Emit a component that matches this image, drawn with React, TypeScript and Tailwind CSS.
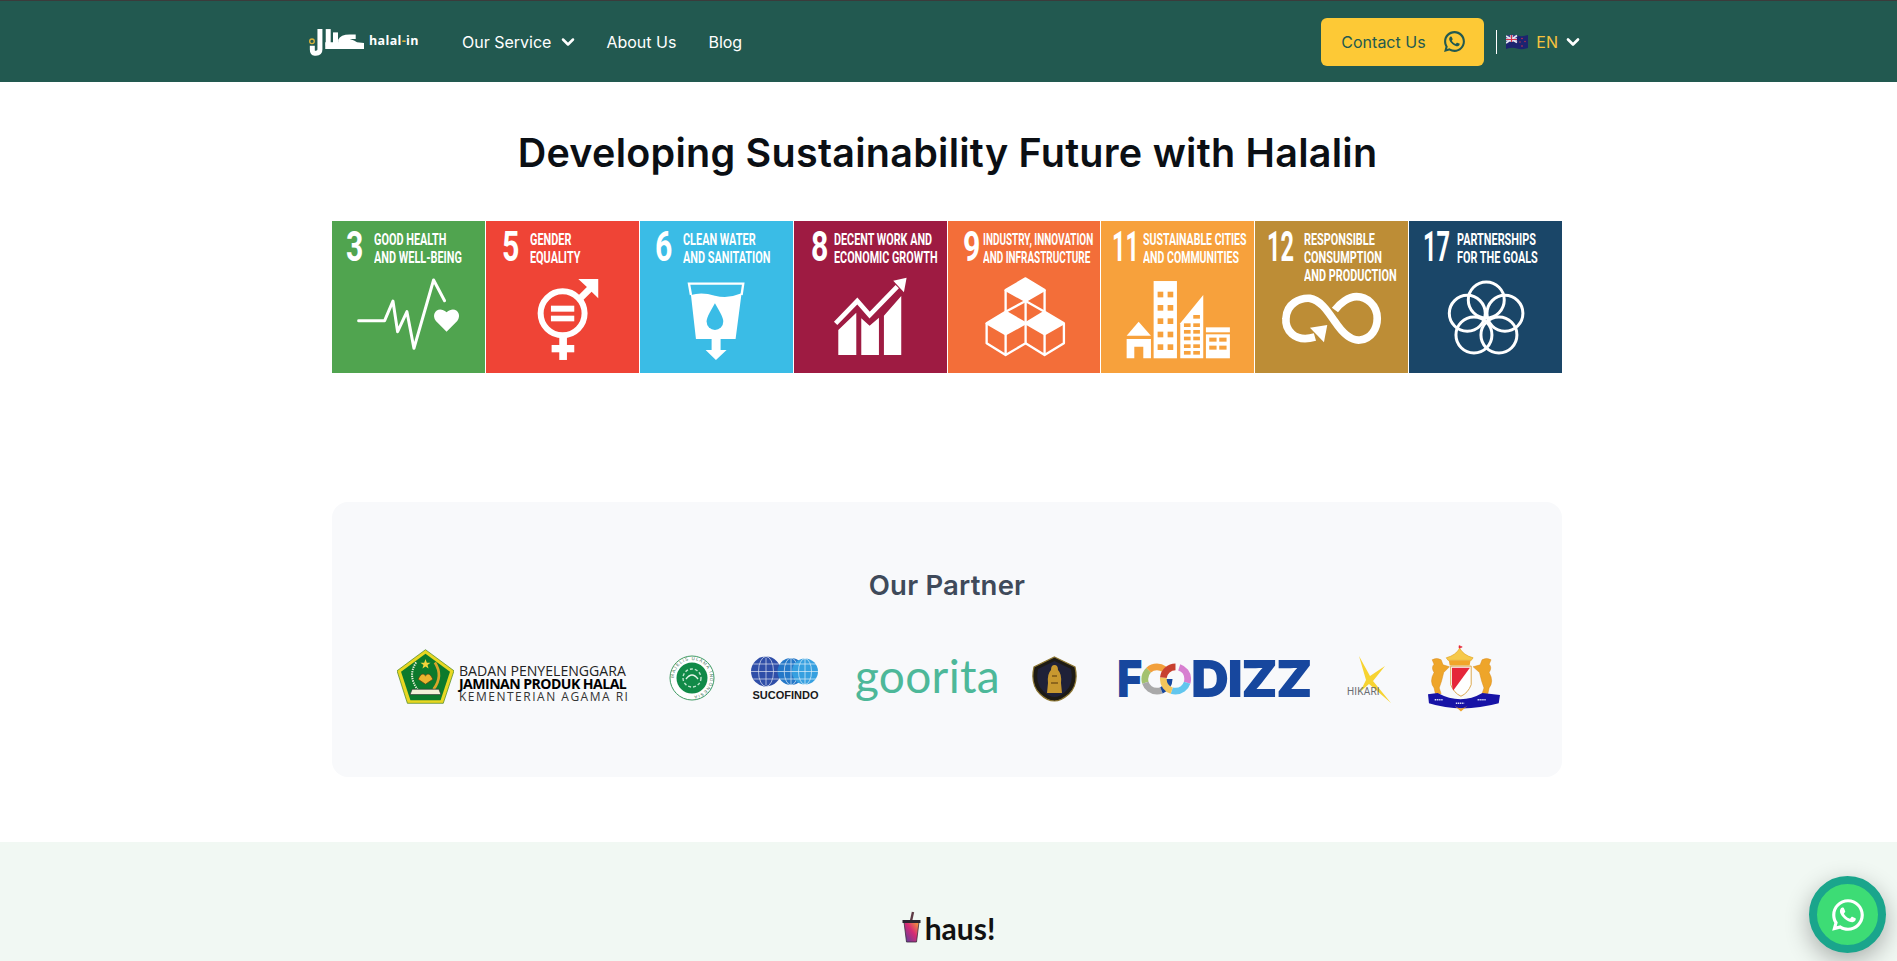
import React from "react";
import { ChevronDown } from "lucide-react";
import { RiWhatsappLine } from "react-icons/ri";

function Tile({ color, num, lines, numBox, textBox, scale, numScale, ox, children }: { color: string; num: string; lines: string[]; numBox: string; textBox: string; scale: string; numScale: string; ox: number; children: React.ReactNode }) {
  return (
    <div className={`flex-1 h-[152px] flex flex-col overflow-hidden ${color}`}>
      <div className={`h-[50px] flex items-start pt-[9px] text-white font-['Roboto'] font-bold ${numBox}`}>
        <div className={`shrink-0 w-0 text-[42px] leading-[34px] whitespace-nowrap origin-top-left ${numScale}`}>{num}</div>
        <div className={`whitespace-nowrap text-[17px] leading-[18px] origin-top-left ${textBox} ${scale}`}>
          {lines.map((l) => <div key={l}>{l}</div>)}
        </div>
      </div>
      <svg viewBox={`${ox} 168 459 306`} className="w-full h-[102px] block">{children}</svg>
    </div>
  );
}

function Pulse() {
  return (
    <>
      <polyline points="100,317 178,317 203,258 217,350 245,290 266,400 325,195 358,257" fill="none" stroke="#fff" strokeWidth="9" strokeLinejoin="round" strokeLinecap="round" />
      <path d="M364 350 L332 318 C315 295 340 270 364 292 C388 270 413 295 396 318 Z" fill="#fff" />
    </>
  );
}
function Gender() {
  return (
    <>
      <circle cx="710" cy="295" r="66" fill="none" stroke="#fff" strokeWidth="18" />
      <path d="M757 192 H817 V250 L797 230 L772 255 L758 241 L783 216 Z" fill="#fff" />
      <rect x="675" y="272" width="70" height="18" fill="#fff" />
      <rect x="675" y="302" width="70" height="17" fill="#fff" />
      <rect x="700" y="365" width="23" height="70" fill="#fff" />
      <rect x="677" y="390" width="68" height="22" fill="#fff" />
    </>
  );
}
function Water() {
  return (
    <>
      <path d="M1098 240 L1092 206 H1255 L1250 240" fill="none" stroke="#fff" strokeWidth="7" />
      <path d="M1098 240 Q1130 230 1170 242 Q1210 252 1250 235 L1232 372 H1113 Z" fill="#fff" />
      <path d="M1170 265 C1150 300 1145 310 1145 320 A25 25 0 0 0 1195 320 C1195 310 1190 300 1170 265Z" fill="#3abce6" />
      <path d="M1160 372 H1187 V405 H1205 L1173 435 L1142 405 H1160 Z" fill="#fff" />
    </>
  );
}
function Growth() {
  return (
    <>
      <path d="M143 345 L197 293 V420 H143 Z M212 310 L237 332 L265 308 V420 H212 Z M280 302 L332 243 V420 H280 Z" fill="#fff" />
      <polyline points="135,325 200,258 237,300 320,215" fill="none" stroke="#fff" strokeWidth="14" />
      <polygon points="348,188 308,197 340,232" fill="#fff" />
    </>
  );
}
function Cubes() {
  return (
    <g fill="none" stroke="#fff" strokeWidth="7" strokeLinejoin="round">
      <path d="M705 190 L762 225 L705 258 L645 225 Z" fill="#fff" />
      <path d="M645 225 V290 M762 225 V290 M705 258 V325" />
      <path d="M645 290 L705 325 L645 358 L588 325 Z" fill="#fff" />
      <path d="M588 325 V385 L645 420 L705 385 V325 M645 358 V420 M645 290 L705 258 L762 290" />
      <path d="M762 290 L820 325 L762 358 L705 325 Z" fill="#fff" />
      <path d="M820 325 V385 L762 420 L705 385 M762 358 V420" />
    </g>
  );
}
function City() {
  const rows = [230, 270, 310, 350, 388];
  return (
    <>
      <polygon points="1048,320 1012,362 1085,362" fill="#fff" />
      <path d="M1012 372 H1085 V430 H1062 V395 H1035 V430 H1012 Z" fill="#fff" />
      <rect x="1093" y="198" width="70" height="232" fill="#fff" />
      {rows.map((y) => (
        <g key={y} fill="#f7a13c">
          <rect x="1105" y={y} width="17" height="17" />
          <rect x="1135" y={y} width="17" height="17" />
        </g>
      ))}
      <polygon points="1242,240 1242,430 1173,430 1173,325" fill="#fff" />
      {[300, 325, 345, 365, 388, 408].map((y) => (
        <g key={y} fill="#f7a13c">
          <rect x="1212" y={y} width="20" height="11" />
          {y > 320 && <rect x="1184" y={y} width="20" height="11" />}
        </g>
      ))}
      <rect x="1250" y="337" width="72" height="15" fill="#fff" />
      <rect x="1250" y="358" width="72" height="72" fill="#fff" />
      {[368, 392].map((y) => (
        <g key={y} fill="#f7a13c">
          <rect x="1260" y={y} width="22" height="12" />
          <rect x="1290" y={y} width="22" height="12" />
        </g>
      ))}
    </>
  );
}
function Loop() {
  return (
    <>
      <path d="M195 366 C130 385 105 340 108 310 C110 265 150 248 180 250 C215 255 240 300 255 320 C275 350 300 378 330 375 C365 372 382 340 382 310 C382 270 350 245 320 245 C295 245 270 265 255 285" fill="none" stroke="#fff" strokeWidth="23" />
      <polygon points="180,338 232,330 222,382" fill="#fff" />
    </>
  );
}
function Rings() {
  return (
    <g fill="none" stroke="#fff" strokeWidth="9">
      <circle cx="712" cy="255" r="54" />
      <circle cx="655" cy="295" r="54" />
      <circle cx="675" cy="360" r="54" />
      <circle cx="750" cy="360" r="54" />
      <circle cx="768" cy="295" r="54" />
    </g>
  );
}

function HalalLogo() {
  return (
    <svg viewBox="27 27 166 84" className="w-[55px] h-[28px] shrink-0">
      <g fill="none" stroke="#fff" strokeWidth="15">
        <path d="M60 30 V92 Q60 103 48 103 H44 Q37 103 37 92 V80" />
        <path d="M85 30 V80" />
        <path d="M107 40 V80" />
      </g>
      <path d="M76 70 H115 V62 Q122 46 150 46 H168 V60 H150 Q165 64 172 70 L193 72 V90 H76 Z" fill="#fff" />
      <circle cx="36" cy="67" r="7" fill="none" stroke="#d9b23b" strokeWidth="4" />
    </svg>
  );
}

function NzFlag() {
  return (
    <svg viewBox="0 0 22 16" className="w-[22px] h-[16px] mr-[8px]">
      <path d="M0 2 Q6 0 11 1.5 T22 1 V14 Q16 16 11 14.5 T0 15 Z" fill="#1c2470" />
      <path d="M0 2 Q6 0 11 1.5 V8.5 Q6 7 0 9 Z" fill="#3c3f8f" />
      <path d="M0 2 L11 8.5 M11 1.5 L0 9" stroke="#e8e8f0" strokeWidth="1.6" />
      <path d="M5.5 1 V8 M0 5.5 H11" stroke="#e8e8f0" strokeWidth="2.4" />
      <path d="M5.5 1 V8 M0 5.5 H11" stroke="#d6324a" strokeWidth="1.2" />
      <g fill="#d6324a">
        <circle cx="16" cy="4.5" r="0.8" /><circle cx="19" cy="7.5" r="0.7" /><circle cx="14" cy="8" r="0.7" /><circle cx="16" cy="12" r="0.8" />
      </g>
    </svg>
  );
}

function Emblem() {
  return (
    <svg viewBox="37 62 170 160" className="w-[57px] h-[55px] shrink-0 -translate-y-[3px]">
      <polygon points="122,62 207,125 175,222 68,222 37,125" fill="#e8d722" stroke="#3d7f1c" strokeWidth="2" />
      <polygon points="122,74 195,128 167,213 77,213 49,128" fill="#0c7a2c" />
      <polygon points="122,90 126,101 137,101 128,108 131,118 122,112 113,118 116,108 107,101 118,101" fill="#f3d43b" />
      <path d="M150 100 Q176 140 146 180" fill="none" stroke="#d8a52a" strokeWidth="8" />
      <path d="M94 100 Q68 140 98 180" fill="none" stroke="#e9efd9" strokeWidth="6" strokeDasharray="4 3" />
      <path d="M100 150 Q112 125 122 140 Q132 125 144 150 L122 165 Z" fill="#eab52f" stroke="#5b3b12" strokeWidth="2" />
      <path d="M82 180 H162 L168 196 H76 Z" fill="#f4f1d8" stroke="#333" strokeWidth="2" />
    </svg>
  );
}

function MuiSeal() {
  return (
    <svg viewBox="0 0 46 46" className="w-[46px] h-[46px] shrink-0 -translate-y-px">
      <defs>
        <path id="muiArc" d="M5 23 A18 18 0 1 1 41 23 A18 18 0 1 1 5 23" />
      </defs>
      <circle cx="23" cy="23" r="22" fill="#fff" stroke="#3f9a62" strokeWidth="1" />
      <text fontSize="4.4" fill="#3b6d50" fontFamily="Liberation Sans" letterSpacing="1">
        <textPath href="#muiArc">MAJELIS ULAMA INDONESIA</textPath>
      </text>
      <circle cx="23" cy="23" r="15.5" fill="#118a48" />
      <circle cx="23" cy="23" r="9" fill="none" stroke="#bfe5cd" strokeWidth="1.4" strokeDasharray="3 2" />
      <path d="M17 24 Q23 16 29 24" fill="none" stroke="#e6f5ea" strokeWidth="1.4" />
    </svg>
  );
}

function Sucofindo() {
  const globes = [
    { x: 15, r: 15, c: "#2f4ea8" },
    { x: 40, r: 13.5, c: "#2578c8" },
    { x: 54, r: 13, c: "#36a0e0" },
  ];
  return (
    <div className="w-[68px] shrink-0 flex flex-col items-center -translate-y-px">
      <svg viewBox="0 0 68 31" className="w-[68px] h-[31px]">
        {globes.map((g) => (
          <g key={g.x}>
            <circle cx={g.x} cy="15.5" r={g.r} fill={g.c} />
            <g fill="none" stroke="#fff" strokeWidth="0.7" opacity="0.85">
              <ellipse cx={g.x} cy="15.5" rx={g.r * 0.5} ry={g.r} />
              <path d={`M${g.x - g.r} 15.5 h${g.r * 2} M${g.x - g.r * 0.85} 8 h${g.r * 1.7} M${g.x - g.r * 0.85} 23 h${g.r * 1.7} M${g.x} 2 v27`} />
            </g>
          </g>
        ))}
      </svg>
      <div className="font-['Liberation_Sans'] font-bold text-[10.5px] leading-[11px] mt-[3px] text-[#1a1a1a] origin-center scale-x-[1.05]">SUCOFINDO</div>
    </div>
  );
}

function UbShield() {
  return (
    <svg viewBox="0 0 47 46" className="w-[47px] h-[46px] shrink-0">
      <path d="M23.5 1 L44 11 Q48 28 38 38 Q30 45 23.5 45 Q16 45 9 38 Q-1 28 3 11 Z" fill="#1d1a14" stroke="#8a7430" strokeWidth="1.2" />
      <path d="M23.5 5 L40 13 Q43 27 35 35 Q29 41 23.5 41 Q18 41 12 35 Q4 27 7 13 Z" fill="#1f2138" />
      <path d="M23.5 9 Q27 9 27 14 Q31 18 30 27 L31 37 H16 L17 27 Q16 18 20 14 Q20 9 23.5 9 Z" fill="#c8982f" />
      <path d="M21 20 H26 M20 27 H27" stroke="#7a5618" strokeWidth="1.4" />
    </svg>
  );
}

function Foodizz() {
  const arc = (cx: number, color: string, start: number, len: number) => (
    <circle cx={cx} cy="19" r="14.5" fill="none" stroke={color} strokeWidth="8" pathLength={100} strokeDasharray={`${len} ${100 - len}`} strokeDashoffset={-start} transform={`rotate(-90 ${cx} 19)`} />
  );
  return (
    <div className="flex items-center w-[191px] shrink-0 h-[38px] text-[#17479e] font-['Inter'] font-black text-[51px] leading-[38px]">
      <span className="w-[24px] origin-left scale-x-[0.85]">F</span>
      <svg viewBox="0 0 60 38" className="w-[60px] h-[38px]">
        {arc(19, "#a3c26f", 70, 18)}
        {arc(19, "#a9a9a9", 44, 26)}
        {arc(19, "#f2a03c", 88, 22)}
        {arc(19, "#17479e", 25, 19)}
        {arc(41, "#d77fd0", 5, 25)}
        {arc(41, "#62c6ee", 30, 25)}
        {arc(41, "#f3c65c", 55, 22)}
        {arc(41, "#c8402f", 77, 23)}
      </svg>
      <span className="tracking-[-1.5px] origin-left scale-x-[1.03]">DIZZ</span>
    </div>
  );
}

function Hikari() {
  return (
    <div className="w-[47px] h-[47px] shrink-0 flex items-end relative">
      <svg viewBox="0 0 47 47" className="w-[47px] h-[47px]">
        <path d="M14 0 L25 20 L40 10 L28 25 L46 47 L24 28 L15 36 L21 24 Z" fill="#f7d331" />
      </svg>
      <span className="absolute left-[2px] bottom-[6px] font-['Roboto'] text-[10px] leading-[11px] text-[#6a6d72] tracking-[0.2px]">HIKARI</span>
    </div>
  );
}

function Crest() {
  return (
    <svg viewBox="25 20 225 215" className="w-[72px] h-[69px] shrink-0 -translate-y-[2px]">
      <path d="M122 28 L132 32 L122 36 Z M124 28 V42" fill="#e5263a" stroke="#e5263a" strokeWidth="2" />
      <path d="M82 66 Q112 58 124 36 Q136 58 166 66 L160 74 H88 Z" fill="#f6c94a" stroke="#e0a020" strokeWidth="2" />
      <path d="M90 74 H158 L155 90 H93 Z" fill="#f1a52b" />
      <path d="M96 92 H160 V150 Q150 176 128 186 Q106 176 96 150 Z" fill="#fff" stroke="#d9a447" strokeWidth="3" />
      <path d="M100 97 H156 L104 168 Q100 160 100 148 Z" fill="#e5263a" />
      <path d="M38 72 Q52 64 66 72 L72 88 L92 94 L74 112 Q68 140 60 160 L66 178 H48 L44 160 Q28 140 44 112 Q34 96 44 86 Z" fill="#eea52a" stroke="#d98a18" strokeWidth="1.5" />
      <path d="M222 72 Q208 64 194 72 L188 88 L166 94 L186 112 Q192 140 200 160 L194 178 H212 L216 160 Q232 140 216 112 Q226 96 216 86 Z" fill="#eea52a" stroke="#d98a18" strokeWidth="1.5" />
      <path d="M25 180 L55 176 Q128 215 195 176 L250 182 L246 208 Q128 240 28 208 Z" fill="#1713a6" />
      <path d="M46 197 H72 M112 208 H138 M180 197 H206" stroke="#dfe3ff" strokeWidth="4" strokeDasharray="4 2" />
      <path d="M108 216 Q128 232 148 216 L128 234 Z" fill="#eea52a" />
    </svg>
  );
}

function HausCup() {
  return (
    <svg viewBox="0 0 19 32" className="w-[19px] h-[32px] shrink-0">
      <defs>
        <linearGradient id="hausG" x1="0" y1="1" x2="1" y2="0">
          <stop offset="0" stopColor="#4f3fa0" />
          <stop offset="0.55" stopColor="#d62b75" />
          <stop offset="1" stopColor="#f7a531" />
        </linearGradient>
      </defs>
      <path d="M9 10 L11 1" stroke="#5d3a44" strokeWidth="2.4" />
      <path d="M2 11 H17 L14.5 31 H4.5 Z" fill="url(#hausG)" stroke="#3a2b3a" strokeWidth="0.8" />
      <rect x="0.5" y="9" width="18" height="3" fill="#2b2530" />
    </svg>
  );
}

export default function App() {
  return (
    <div className="relative h-[961px] overflow-hidden bg-white font-['Inter',sans-serif]">
      <nav className="h-[82px] bg-[#225950] border-t border-[#3b3b3b] flex items-center justify-between pl-[309px] pr-[314px]">
        <div className="flex items-center text-white text-base">
          <div className="flex items-center w-[153px]">
            <HalalLogo />
            <span className="ml-[5px] font-['Open_Sans'] font-bold text-[12.5px] tracking-[0.35px] leading-none">
              halal<span className="text-[#e2b93b]">-</span>in
            </span>
          </div>
          <a className="flex items-center">
            Our Service
            <ChevronDown size={20} strokeWidth={3} className="ml-[7px]" />
          </a>
          <a className="ml-[28px]">About Us</a>
          <a className="ml-[32px]">Blog</a>
        </div>
        <div className="flex items-center">
          <button className="w-[163px] h-[48px] rounded-md bg-[#fdc936] text-[#225950] text-base flex items-center pl-[20px]">
            Contact Us
            <RiWhatsappLine size={25} className="ml-[16px]" />
          </button>
          <div className="w-px h-[24px] bg-white ml-[12px] mr-[9px]" />
          <NzFlag />
          <span className="text-[#f6c23e] text-base">EN</span>
          <ChevronDown size={20} strokeWidth={3.2} className="text-white ml-[5px]" />
        </div>
      </nav>

      <h1 className="mt-[48px] h-[46px] text-center text-[39.5px] leading-[46px] font-semibold text-[#0b0f14] tracking-[0.25px] -translate-x-[1px]">
        Developing Sustainability Future with Halalin
      </h1>

      <div className="mt-[45px] ml-[332px] w-[1230px] flex gap-px">
        <Tile color="bg-[#50a44f]" num="3" numScale="scale-x-[0.72]" lines={["GOOD HEALTH", "AND WELL-BEING"]} numBox="pl-[14px]" textBox="ml-[28px]" scale="scale-x-[0.64]" ox={20}><Pulse /></Tile>
        <Tile color="bg-[#ef4436]" num="5" numScale="scale-x-[0.72]" lines={["GENDER", "EQUALITY"]} numBox="pl-[16px]" textBox="ml-[28px]" scale="scale-x-[0.64]" ox={480}><Gender /></Tile>
        <Tile color="bg-[#3abce6]" num="6" numScale="scale-x-[0.72]" lines={["CLEAN WATER", "AND SANITATION"]} numBox="pl-[15px]" textBox="ml-[28px]" scale="scale-x-[0.64]" ox={945}><Water /></Tile>
        <Tile color="bg-[#9e1b42]" num="8" numScale="scale-x-[0.72]" lines={["DECENT WORK AND", "ECONOMIC GROWTH"]} numBox="pl-[17px]" textBox="ml-[23px]" scale="scale-x-[0.635]" ox={10}><Growth /></Tile>
        <Tile color="bg-[#f36e39]" num="9" numScale="scale-x-[0.72]" lines={["INDUSTRY, INNOVATION", "AND INFRASTRUCTURE"]} numBox="pl-[15px]" textBox="ml-[20px]" scale="scale-x-[0.585]" ox={472}><Cubes /></Tile>
        <Tile color="bg-[#f7a13c]" num="11" numScale="scale-x-[0.56]" lines={["SUSTAINABLE CITIES", "AND COMMUNITIES"]} numBox="pl-[11px]" textBox="ml-[31px]" scale="scale-x-[0.62]" ox={935}><City /></Tile>
        <Tile color="bg-[#bd8d36]" num="12" numScale="scale-x-[0.56]" lines={["RESPONSIBLE", "CONSUMPTION", "AND PRODUCTION"]} numBox="pl-[12px]" textBox="ml-[37px]" scale="scale-x-[0.64]" ox={15}><Loop /></Tile>
        <Tile color="bg-[#1a4668]" num="17" numScale="scale-x-[0.56]" lines={["PARTNERSHIPS", "FOR THE GOALS"]} numBox="pl-[14px]" textBox="ml-[34px]" scale="scale-x-[0.64]" ox={480}><Rings /></Tile>
      </div>

      <section className="mt-[129px] ml-[332px] w-[1230px] h-[275px] rounded-2xl bg-[#f8f9fb] pt-[66px] flex flex-col items-center">
        <h2 className="text-[27.5px] leading-[34px] font-semibold text-[#3f4a5a] tracking-[0.2px]">Our Partner</h2>
        <div className="mt-[42px] w-full h-[70px] pl-[65px] flex items-center">
          <div className="flex items-center w-[230px] shrink-0">
            <Emblem />
            <div className="ml-[5px] mt-[8px] font-['Open_Sans'] text-black whitespace-nowrap">
              <div className="text-[14.1px] leading-[13px] text-[#222]">BADAN PENYELENGGARA</div>
              <div className="text-[14.1px] leading-[13px] font-bold tracking-[-0.55px]">JAMINAN PRODUK HALAL</div>
              <div className="text-[12px] leading-[13px] tracking-[1.5px] text-[#333]">KEMENTERIAN AGAMA RI</div>
            </div>
          </div>
          <div className="ml-[42px]"><MuiSeal /></div>
          <div className="ml-[36px]"><Sucofindo /></div>
          <div className="ml-[36px] w-[140px] shrink-0 -translate-y-[3px] font-['Lato'] text-[#4db899] text-[46px] leading-[42px] text-center tracking-[0.3px]">goorita</div>
          <div className="ml-[36px]"><UbShield /></div>
          <div className="ml-[39px]"><Foodizz /></div>
          <div className="ml-[37px]"><Hikari /></div>
          <div className="ml-[36px]"><Crest /></div>
        </div>
      </section>

      <section className="mt-[65px] h-[119px] bg-[#f1f8f3] flex justify-center items-end">
        <div className="flex items-end pb-[18px]">
          <HausCup />
          <span className="ml-[4px] font-['Lato'] text-[30px] leading-[30px] font-bold text-[#111]">haus!</span>
        </div>
      </section>

      <a className="absolute left-[1809px] top-[876px] w-[77px] h-[77px] rounded-full bg-[#3ddc75] border-[8px] border-[#1aa58c] shadow-[0_8px_24px_rgba(0,0,0,0.3)] flex items-center justify-center text-white">
        <RiWhatsappLine size={38} />
      </a>
    </div>
  );
}
